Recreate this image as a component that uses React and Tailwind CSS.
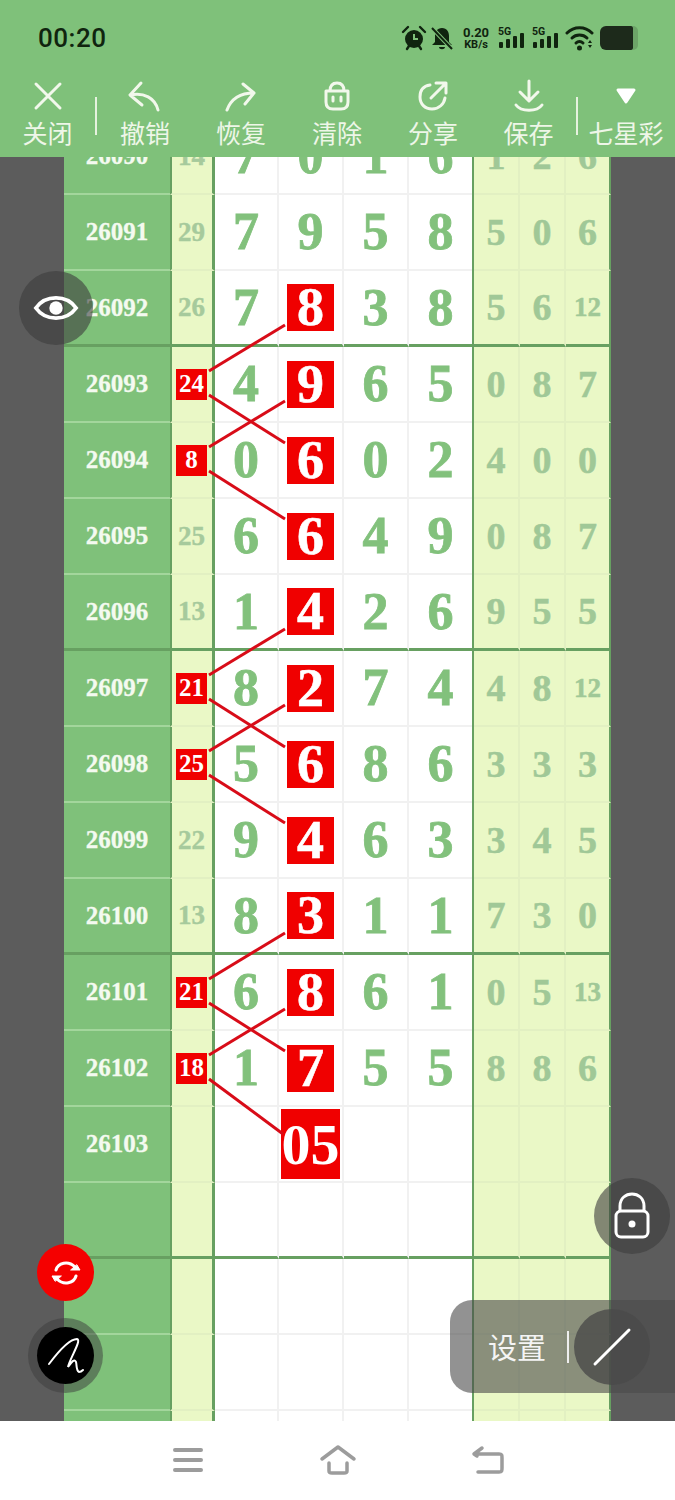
import React from 'react';

const rows = [
  ['26090', '14', ['7', '0', '1', '6'], ['1', '2', '6']],
  ['26091', '29', ['7', '9', '5', '8'], ['5', '0', '6']],
  ['26092', '26', ['7', '8', '3', '8'], ['5', '6', '12']],
  ['26093', '24', ['4', '9', '6', '5'], ['0', '8', '7'], true],
  ['26094', '8', ['0', '6', '0', '2'], ['4', '0', '0'], true],
  ['26095', '25', ['6', '6', '4', '9'], ['0', '8', '7']],
  ['26096', '13', ['1', '4', '2', '6'], ['9', '5', '5']],
  ['26097', '21', ['8', '2', '7', '4'], ['4', '8', '12'], true],
  ['26098', '25', ['5', '6', '8', '6'], ['3', '3', '3'], true],
  ['26099', '22', ['9', '4', '6', '3'], ['3', '4', '5']],
  ['26100', '13', ['8', '3', '1', '1'], ['7', '3', '0']],
  ['26101', '21', ['6', '8', '6', '1'], ['0', '5', '13'], true],
  ['26102', '18', ['1', '7', '5', '5'], ['8', '8', '6'], true],
  ['26103', '', ['', '05', '', ''], ['', '', '']],
  ['', '', ['', '', '', ''], ['', '', '']],
  ['', '', ['', '', '', ''], ['', '', '']],
  ['', '', ['', '', '', ''], ['', '', '']],
  ['', '', ['', '', '', ''], ['', '', '']],
];

// red links between the sum column and the second digit
const links = [
  [285, 325, 209, 371], [209, 395, 285, 443], [285, 401, 209, 447], [209, 471, 285, 519],
  [285, 629, 209, 675], [209, 699, 285, 747], [285, 705, 209, 751], [209, 775, 285, 823],
  [285, 933, 209, 979], [209, 1003, 285, 1051], [285, 1009, 209, 1055], [209, 1079, 283, 1134],
];

const cellWidths = ['w-[64px]', 'w-[65px]', 'w-[65px]', 'w-[63px]'];
const sideWidths = ['w-[46px]', 'w-[46px]', 'w-[45px]'];

function Row({ row, index }) {
  const [id, sum, digits, side, marked] = row;
  const thick = (index + 2) % 4 === 0 && index < 16;
  const line = thick ? 'border-b-[3px] border-b-[#67a061]' : 'border-b-2';
  return (
    <div className="flex h-[76px]">
      <div className={`w-[106px] flex items-center justify-center text-[25px] font-bold text-[#f4faf0] [-webkit-text-stroke:0.3px_currentColor] ${line} ${thick ? '' : 'border-b-[#a3d69c]'}`}>
        {id}
      </div>
      <div className={`w-[45px] border-x-[#67a061] border-l-2 border-r-[3px] bg-[#eaf8c6] flex items-center justify-center pr-[1px] ${line} ${thick ? '' : 'border-b-[#e2f0c2]'}`}>
        {marked ? (
          <span className="w-[31px] h-[31px] bg-[#f00000] text-white text-[25px] font-bold flex items-center justify-center">{sum}</span>
        ) : (
          <span className="text-[27px] font-bold text-[#a6ca9c] [-webkit-text-stroke:0.4px_currentColor]">{sum}</span>
        )}
      </div>
      {digits.map((d, i) => (
        <div key={i} className={`${cellWidths[i]} bg-white flex items-center justify-center ${line} ${i < 3 ? 'border-r-2 border-r-[#f1f1f1]' : ''} ${thick ? '' : 'border-b-[#f1f1f1]'}`}>
          {i === 1 && d === '05' ? (
            <span className="w-[59px] h-[70px] bg-[#f00000] text-white text-[58px] font-bold flex items-center justify-center">{d}</span>
          ) : i === 1 && index > 1 && d ? (
            <span className="w-[47px] h-[47px] bg-[#f00000] text-white text-[54px] font-bold flex items-center justify-center [-webkit-text-stroke:0.6px_currentColor]">{d}</span>
          ) : (
            <span className="text-[52px] font-bold text-[#82c17c] [-webkit-text-stroke:0.8px_currentColor]">{d}</span>
          )}
        </div>
      ))}
      <div className="w-[2px] bg-[#67a061]" />
      {side.map((d, i) => (
        <div key={i} className={`${sideWidths[i]} bg-[#eaf8c6] flex items-center justify-center font-bold text-[#a0c897] [-webkit-text-stroke:0.5px_currentColor] ${line} ${i < 2 ? 'border-r-2 border-r-[#e2f0c2]' : 'border-r-2 border-r-[#67a061]'} ${thick ? '' : 'border-b-[#e2f0c2]'} ${d.length > 1 ? 'text-[27px]' : 'text-[38px]'}`}>
          {d}
        </div>
      ))}
    </div>
  );
}

function ToolItem({ label, width, children }) {
  return (
    <div className={`${width} flex flex-col items-center pt-[2px]`}>
      <svg width="36" height="36" viewBox="0 0 36 36" fill="none" stroke="#f2f8ec" strokeWidth="3" strokeLinecap="round" strokeLinejoin="round">
        {children}
      </svg>
      <span className="mt-[2px] text-[25px] leading-[32px] whitespace-nowrap text-[#eef6e8]">{label}</span>
    </div>
  );
}

function StatusIcons() {
  return (
    <div className="flex items-center text-[#10240f]">
      <svg width="26" height="26" viewBox="0 0 26 26" fill="currentColor">
        <circle cx="13" cy="14" r="9" />
        <path d="M2 7 L7 2 M24 7 L19 2 M6 24 L8 21 M20 24 L18 21" stroke="currentColor" strokeWidth="2.4" strokeLinecap="round" />
        <path d="M13 9 V14 H17" stroke="#7fc17a" strokeWidth="2" fill="none" />
      </svg>
      <svg className="ml-[2px]" width="26" height="26" viewBox="0 0 26 26" fill="currentColor">
        <path d="M13 3 C8 3 6 7 6 11 V17 L3 20 H23 L20 17 V11 C20 7 18 3 13 3 Z M10 22 H16 C16 25 10 25 10 22 Z" />
        <path d="M3 3 L23 24" stroke="#7fc17a" strokeWidth="4" />
        <path d="M3 3 L23 24" stroke="currentColor" strokeWidth="2" />
      </svg>
      <div className="ml-[6px] w-[30px] flex flex-col items-center text-[13px] leading-[13px] font-bold" style={{ fontFamily: 'Roboto, sans-serif' }}>
        <span>0.20</span>
        <span className="text-[11px] leading-[11px]">KB/s</span>
      </div>
      {[0, 1].map((n) => (
        <svg key={n} className="ml-[7px]" width="27" height="26" viewBox="0 0 27 26" fill="currentColor">
          <rect x="1" y="17" width="4" height="6" rx="1" />
          <rect x="8" y="14" width="4" height="9" rx="1" />
          <rect x="15" y="11" width="4" height="12" rx="1" />
          <rect x="22" y="8" width="4" height="15" rx="1" />
          <text x="0" y="9.5" fontSize="10.5" fontWeight="700" fontFamily="Roboto, sans-serif">5G</text>
        </svg>
      ))}
      <svg className="ml-[6px]" width="30" height="26" viewBox="0 0 30 26" fill="none" stroke="currentColor" strokeWidth="3" strokeLinecap="round">
        <path d="M2 8 C9 1 20 1 27 8" />
        <path d="M7 13 C11 9 18 9 22 13" />
        <path d="M11 18 C13 16 16 16 18 18" />
        <circle cx="14.5" cy="23" r="1" fill="currentColor" />
        <path d="M25 15 L23 18 H27 Z M25 23 L23 20 H27 Z" fill="currentColor" stroke="none" />
      </svg>
      <div className="ml-[5px] flex items-center">
        <div className="w-[33px] h-[24px] rounded-l-[6px] rounded-r-[2px] bg-[#1d2a1b]" />
        <div className="w-[5px] h-[24px] rounded-r-[6px] bg-[#6da468]" />
      </div>
    </div>
  );
}

export default function App() {
  return (
    <div className="relative w-[675px] h-[1500px] overflow-hidden flex flex-col bg-white" style={{ fontFamily: '"Liberation Serif", serif' }}>
      <header className="h-[157px] bg-[#7fc17a] relative z-10" style={{ fontFamily: '"Noto Sans CJK SC", "Noto Sans", sans-serif' }}>
        <div className="h-[76px] pl-[38px] pr-[37px] flex items-center justify-between">
          <span className="text-[26px] font-medium text-[#10240f] tracking-[0.5px]" style={{ fontFamily: 'Roboto, sans-serif' }}>00:20</span>
          <StatusIcons />
        </div>
        <div className="flex items-start h-[81px]">
          <ToolItem label="关闭" width="w-[95px]">
            <path d="M6 6 L30 30 M30 6 L6 30" />
          </ToolItem>
          <div className="w-[2px] h-[38px] mt-[21px] bg-[#e6f2df]" />
          <ToolItem label="撤销" width="w-[96px]">
            <path d="M14 5 L3 17 L15 27 M3 17 C17 14 28 20 31 32" />
          </ToolItem>
          <ToolItem label="恢复" width="w-[96px]">
            <path d="M20 6 L31 15 L22 26 M31 15 C17 15 8 21 4 32" />
          </ToolItem>
          <ToolItem label="清除" width="w-[96px]">
            <path d="M11 13 C11 7 14 5 18 5 C22 5 25 7 25 13 M7 13 H29 V24 C29 29 26 31 22 31 H14 C10 31 7 29 7 24 Z M14 19 V23 M22 19 V23" />
          </ToolItem>
          <ToolItem label="分享" width="w-[96px]">
            <path d="M15 7 C8 8 5 13 5 19 C5 26 10 31 17 31 C24 31 29 26 30 20 M16 20 L30 6 M21 5 H31 V15" />
          </ToolItem>
          <ToolItem label="保存" width="w-[95px]">
            <path d="M18 3 V22 M9 14 L18 23 L27 14 M5 27 C10 34 26 34 31 27" />
          </ToolItem>
          <div className="w-[2px] h-[38px] mt-[21px] bg-[#e6f2df]" />
          <ToolItem label="七星彩" width="w-[96px]">
            <path d="M10 12 H26 L18 24 Z" fill="#ffffff" stroke="#ffffff" />
          </ToolItem>
        </div>
      </header>

      <main className="h-[1264px] bg-[#5c5c5c] overflow-hidden pl-[64px]">
        <div className="w-[547px] -mt-[38px] bg-[#7fc17a]">
          {rows.map((row, i) => (
            <Row key={i} row={row} index={i} />
          ))}
        </div>
      </main>

      <nav className="flex-1 bg-white flex items-center justify-center gap-[90px] pb-[1px]">
        <svg width="60" height="40" viewBox="0 0 60 40" fill="none" stroke="#9c9c9c" strokeWidth="4" strokeLinecap="round">
          <path d="M17 10 H43 M17 20 H43 M17 30 H43" />
        </svg>
        <svg width="60" height="40" viewBox="0 0 60 40" fill="none" stroke="#9c9c9c" strokeWidth="3.5" strokeLinecap="round" strokeLinejoin="round">
          <path d="M14 19 L30 7 L46 19 M21 23 V31 C21 33 22 33 24 33 H36 C38 33 39 33 39 31 V23" />
        </svg>
        <svg width="60" height="40" viewBox="0 0 60 40" fill="none" stroke="#9c9c9c" strokeWidth="3.5" strokeLinecap="round" strokeLinejoin="round">
          <path d="M16 14 H41 C44 14 44 15 44 18 V28 C44 31 44 32 41 32 H20 M24 8 L16 14 L19 16" />
        </svg>
      </nav>

      <svg className="absolute inset-0 pointer-events-none" width="675" height="1421" viewBox="0 0 675 1421" fill="none" stroke="#d80c18" strokeWidth="3">
        {links.map(([x1, y1, x2, y2], i) => (
          <line key={i} x1={x1} y1={y1} x2={x2} y2={y2} />
        ))}
      </svg>

      <button className="absolute left-[19px] top-[271px] w-[74px] h-[74px] rounded-full bg-[#3c3c3c]/60 flex items-center justify-center">
        <svg width="46" height="36" viewBox="0 0 48 36" fill="none" stroke="#ffffff" strokeWidth="4">
          <path d="M3 18 C13 4 35 4 45 18 C35 32 13 32 3 18 Z" />
          <circle cx="24" cy="18" r="7" fill="#ffffff" stroke="none" />
        </svg>
      </button>

      <button className="absolute left-[37px] top-[1244px] w-[57px] h-[57px] rounded-full bg-[#f50000] flex items-center justify-center">
        <svg width="32" height="32" viewBox="0 0 32 32" fill="none" stroke="#ffffff" strokeWidth="3" strokeLinecap="round">
          <path d="M6 13 C8 6 18 3 25 10 M26 19 C24 26 14 29 7 22" />
          <path d="M21 13 L30 13 L27 8 Z M11 19 L2 19 L5 24 Z" fill="#ffffff" strokeWidth="1" />
        </svg>
      </button>

      <button className="absolute left-[28px] top-[1318px] w-[75px] h-[75px] rounded-full bg-[#3c3c3c]/50 flex items-center justify-center">
        <span className="w-[57px] h-[57px] rounded-full bg-black flex items-center justify-center">
          <svg width="40" height="40" viewBox="0 0 40 40" fill="none" stroke="#ffffff" strokeWidth="2" strokeLinecap="round">
            <path d="M3 28 C12 16 24 3 31 3 C36 4 24 22 22 31 C25 27 28 22 30 26 C31 30 30 34 33 36 C35 36 36 35 37 34" />
          </svg>
        </span>
      </button>

      <button className="absolute left-[594px] top-[1178px] w-[76px] h-[76px] rounded-full bg-[#3c3c3c]/60 flex items-center justify-center">
        <svg width="38" height="50" viewBox="0 0 38 50" fill="none" stroke="#ffffff" strokeWidth="3">
          <path d="M7 20 V15 C7 -1 31 -1 31 15 V20" />
          <rect x="3" y="20" width="32" height="26" rx="5" />
          <circle cx="19" cy="33" r="3.5" fill="#ffffff" stroke="none" />
        </svg>
      </button>

      <div className="absolute left-[450px] top-[1300px] w-[225px] h-[93px] rounded-l-[22px] bg-[#4a4a4a]/60 flex items-center" style={{ fontFamily: '"Noto Sans CJK SC", sans-serif' }}>
        <span className="ml-[38px] text-[29px] text-[#f4f4f4]">设置</span>
        <span className="ml-[21px] w-[2px] h-[32px] bg-[#eeeeee]" />
        <span className="ml-[5px] w-[76px] h-[76px] rounded-full bg-[#4a4a4a]/80 flex items-center justify-center">
          <svg width="40" height="40" viewBox="0 0 40 40" stroke="#ffffff" strokeWidth="3" strokeLinecap="round">
            <path d="M3 37 L37 3" />
          </svg>
        </span>
      </div>
    </div>
  );
}
